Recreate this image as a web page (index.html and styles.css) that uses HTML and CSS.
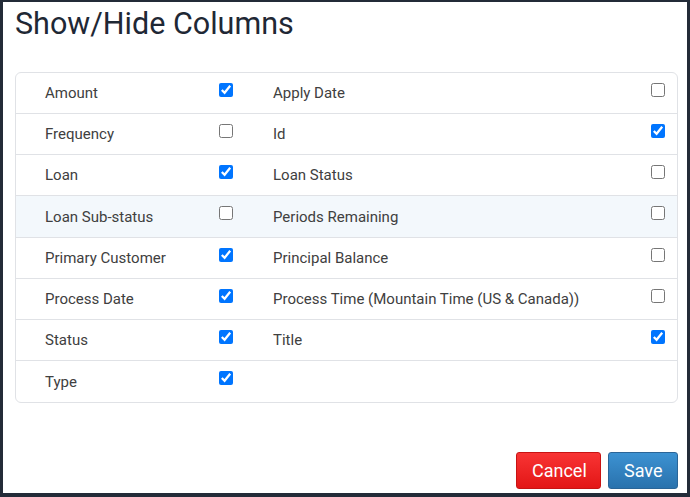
FILE: index.html
```html
<!DOCTYPE html>
<html>
<head>
<meta charset="utf-8">
<link rel="stylesheet" href="styles.css">
</head>
<body>
<div class="dialog">
  <h1 class="title">Show/Hide Columns</h1>
  <div class="table">
    <div class="row"><span class="label">Amount</span><input type="checkbox" class="cb" checked><span class="label">Apply Date</span><input type="checkbox" class="cb"></div>
    <div class="row"><span class="label">Frequency</span><input type="checkbox" class="cb"><span class="label">Id</span><input type="checkbox" class="cb" checked></div>
    <div class="row"><span class="label">Loan</span><input type="checkbox" class="cb" checked><span class="label">Loan Status</span><input type="checkbox" class="cb"></div>
    <div class="row hover"><span class="label">Loan Sub-status</span><input type="checkbox" class="cb"><span class="label">Periods Remaining</span><input type="checkbox" class="cb"></div>
    <div class="row"><span class="label">Primary Customer</span><input type="checkbox" class="cb" checked><span class="label">Principal Balance</span><input type="checkbox" class="cb"></div>
    <div class="row"><span class="label">Process Date</span><input type="checkbox" class="cb" checked><span class="label">Process Time (Mountain Time (US &amp; Canada))</span><input type="checkbox" class="cb"></div>
    <div class="row"><span class="label">Status</span><input type="checkbox" class="cb" checked><span class="label">Title</span><input type="checkbox" class="cb" checked></div>
    <div class="row last"><span class="label">Type</span><input type="checkbox" class="cb" checked><span class="label"></span><span></span></div>
  </div>
  <div class="footer">
    <button class="btn btn-cancel">Cancel</button>
    <button class="btn btn-save">Save</button>
  </div>
</div>
</body>
</html>
```

FILE: styles.css
```css
html, body {
  margin: 0;
  padding: 0;
  background: #ffffff;
}
body {
  font-family: Roboto, "Liberation Sans", sans-serif;
}
.dialog {
  box-sizing: border-box;
  width: 690px;
  height: 497px;
  border-style: solid;
  border-color: #232b38;
  border-width: 2px 3px 4px 3px;
  padding: 4px 9px 4px 12px;
  display: flex;
  flex-direction: column;
  background: #fff;
}
.title {
  margin: 0;
  font-size: 30.5px;
  font-weight: 400;
  line-height: 35px;
  color: #1f2835;
}
.table {
  margin-top: 31px;
  border: 1px solid #e0e2e6;
  border-radius: 6px;
  overflow: hidden;
}
.row {
  display: grid;
  grid-template-columns: 174px 54px 1fr 14px;
  align-items: center;
  height: 40px;
  padding: 0 12px 0 29px;
  border-bottom: 1px solid #e0e2e6;
}
.row.hover {
  height: 41px;
  background: #f3f8fc;
}
.row.last {
  border-bottom: none;
  height: 41px;
}
.label {
  font-size: 15px;
  color: #404040;
}
.cb {
  margin: 10px 0 0 0;
  width: 14px;
  height: 14px;
  align-self: start;
  justify-self: start;
}
.footer {
  margin-top: auto;
  display: flex;
  justify-content: flex-end;
  gap: 7px;
}
.btn {
  height: 37px;
  padding: 0 15px;
  font-family: Roboto, "Liberation Sans", sans-serif;
  font-size: 18px;
  color: #fff;
  border-radius: 3px;
  border: 1px solid;
  cursor: pointer;
}
.btn-cancel {
  width: 85px;
  background: linear-gradient(#f83434, #e31616);
  border-color: #c81313;
}
.btn-save {
  width: 70px;
  background: linear-gradient(#3c92d2, #2a72ad);
  border-color: #2a6598;
}
```
